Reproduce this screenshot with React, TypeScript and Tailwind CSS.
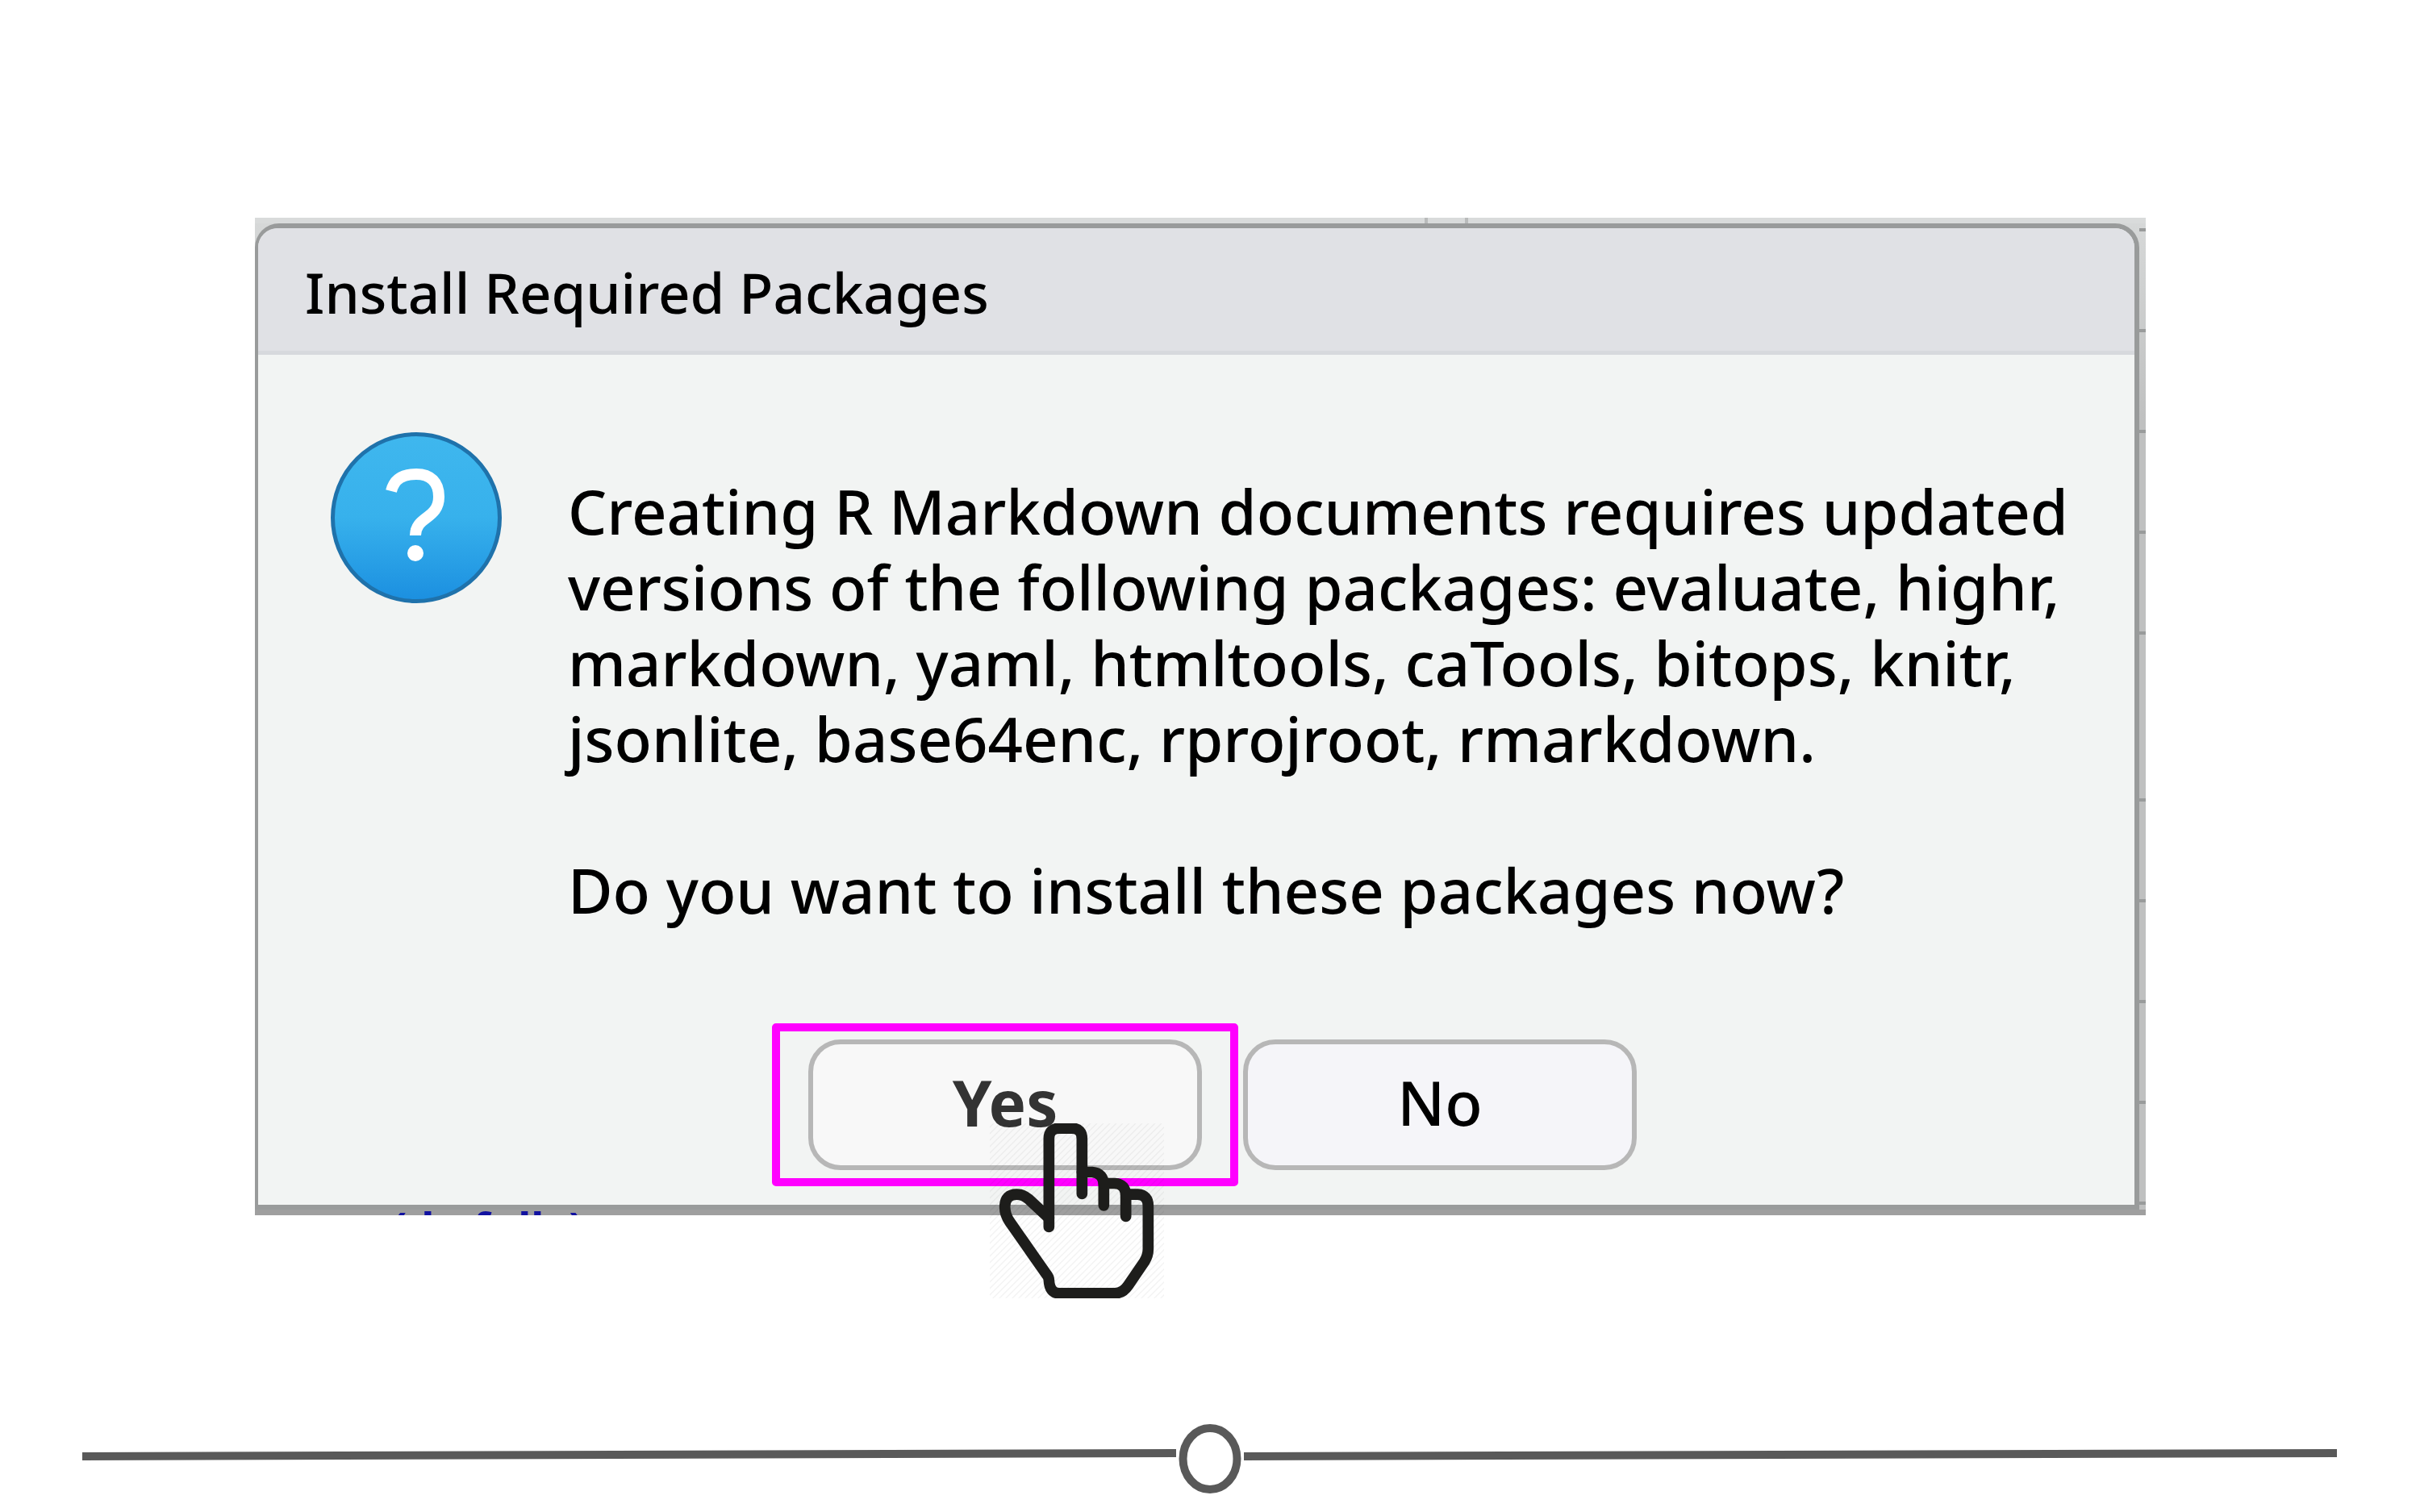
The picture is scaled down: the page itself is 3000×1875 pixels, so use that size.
const Hand = () => (
  <svg viewBox="80 458 648 650" className="pointer-events-none absolute left-[260px] top-[114px] h-[217px] w-[216px] max-w-none" aria-hidden="true">
    <defs>
      <pattern id="hatch" width="24" height="24" patternUnits="userSpaceOnUse">
        <path d="M-4 28L28 -4M-4 4L4 -4M20 28L28 20" stroke="#000" strokeOpacity="0.09" strokeWidth="3" />
      </pattern>
    </defs>
    <rect x="80" y="458" width="648" height="650" fill="url(#hatch)" />
    <g fill="none" stroke="#1d1d1b" strokeWidth="41" strokeLinecap="round" strokeLinejoin="round">
      <path d="M300 843V515Q300 476 340 476H385Q423 476 423 515V720" />
      <path d="M423 639H460Q504 642 504 690V763" />
      <path d="M504 681H545Q586 683 586 728V804" />
      <path d="M586 722H630Q669 724 669 765V925Q669 950 655 972L595 1060Q575 1090 545 1090H340Q302 1090 300 1040Q300 1030 290 1018L155 825Q135 797 136 765Q138 722 180 722Q205 722 225 740L300 810" />
    </g>
  </svg>
);

const Ticks = () => (
  <div className="flex flex-col gap-[121px]">
    {Array.from({ length: 5 }, (_, i) => <span key={i} className="h-[4px] bg-[#999b9b]" />)}
  </div>
);

export default function App() {
  return (
    <main className="flex min-h-screen flex-col bg-white pt-[270px] font-['Noto_Sans',sans-serif] font-medium text-black">
      <div className="ml-[316px] mr-[340px] bg-[#c0c1c1]">
        <div className="flex h-[7px] bg-[#d9dbdb] pl-[1450px]">
          <span className="h-full w-[54px] border-x-4 border-[#b9bbbb]" />
        </div>
        <div className="flex bg-linear-to-b from-[#d6d8d8] to-[#bfc0c0] to-20%">
          <section className="min-w-0 flex-1 rounded-t-[30px] border-[6px] border-l-4 border-[#999b9b] bg-[#f2f4f3]">
            <header className="rounded-t-[24px] border-b-[5px] border-[#d7d9dd] bg-[#e0e1e5] px-[58px] pt-[29px] pb-[23px]">
              <h1 className="text-[69px] leading-[100px]">Install Required Packages</h1>
            </header>
            <div className="flex gap-[82px] pt-[96px] pl-[90px]">
              <svg viewBox="0 0 212 212" className="size-[212px] shrink-0" aria-hidden="true">
                <defs>
                  <linearGradient id="blue" x1="0" y1="0" x2="0" y2="1">
                    <stop offset="0" stopColor="#3fb7ee" />
                    <stop offset="0.5" stopColor="#37b1ec" />
                    <stop offset="1" stopColor="#1b8fe0" />
                  </linearGradient>
                </defs>
                <circle cx="106" cy="106" r="103.500" fill="url(#blue)" stroke="#1f72ab" strokeWidth="5" />
                <path d="M75 73C79 57 90 52 106 52C124 52 134 62 134 80C134 108 105 104 105 128" fill="none" stroke="#fff" strokeWidth="14" />
                <circle cx="105" cy="150" r="10" fill="#fff" />
              </svg>
              <p className="pt-[51px] text-[76px] leading-[94px] whitespace-pre-line">
                {"Creating R Markdown documents requires updated\nversions of the following packages: evaluate, highr,\nmarkdown, yaml, htmltools, caTools, bitops, knitr,\njsonlite, base64enc, rprojroot, rmarkdown.\n\nDo you want to install these packages now?"}
              </p>
            </div>
            <div className="flex items-center gap-[6px] pt-[118px] pb-[23px] pl-[637px]">
              <div className="relative flex h-[202px] w-[578px] items-center justify-center rounded-[5px] border-[10px] border-[#ff00ff]">
                <button className="h-[162px] w-[488px] rounded-[40px] border-[6px] border-[#b7b7b7] bg-[#f8f8f8] pb-[6px] text-[78px] leading-[94px] font-bold text-[#333]">Yes</button>
                <Hand />
              </div>
              <button className="h-[162px] w-[488px] rounded-[40px] border-[6px] border-[#b7b7b7] bg-[#f5f5f9] pb-[6px] text-[76px] leading-[94px]">No</button>
            </div>
          </section>
          <div className="flex w-[8px] flex-col gap-[203px] pt-[6px]">
            <Ticks />
            <Ticks />
          </div>
        </div>
        <div className="flex h-[7px] items-start overflow-hidden bg-[#9f9f9f] pl-[170px]">
          <span className="text-[54px] leading-[44px] font-bold text-[#1111a0]">(do fully)</span>
        </div>
      </div>
      <svg viewBox="0 0 3000 90" className="mt-[256px] w-full" aria-hidden="true">
        <g stroke="#595959" strokeWidth="10" fill="none">
          <path d="M102 43L1458 39" />
          <path d="M1542 43L2897 39" />
          <ellipse cx="1500" cy="46" rx="33.500" ry="38" />
        </g>
      </svg>
    </main>
  );
}
